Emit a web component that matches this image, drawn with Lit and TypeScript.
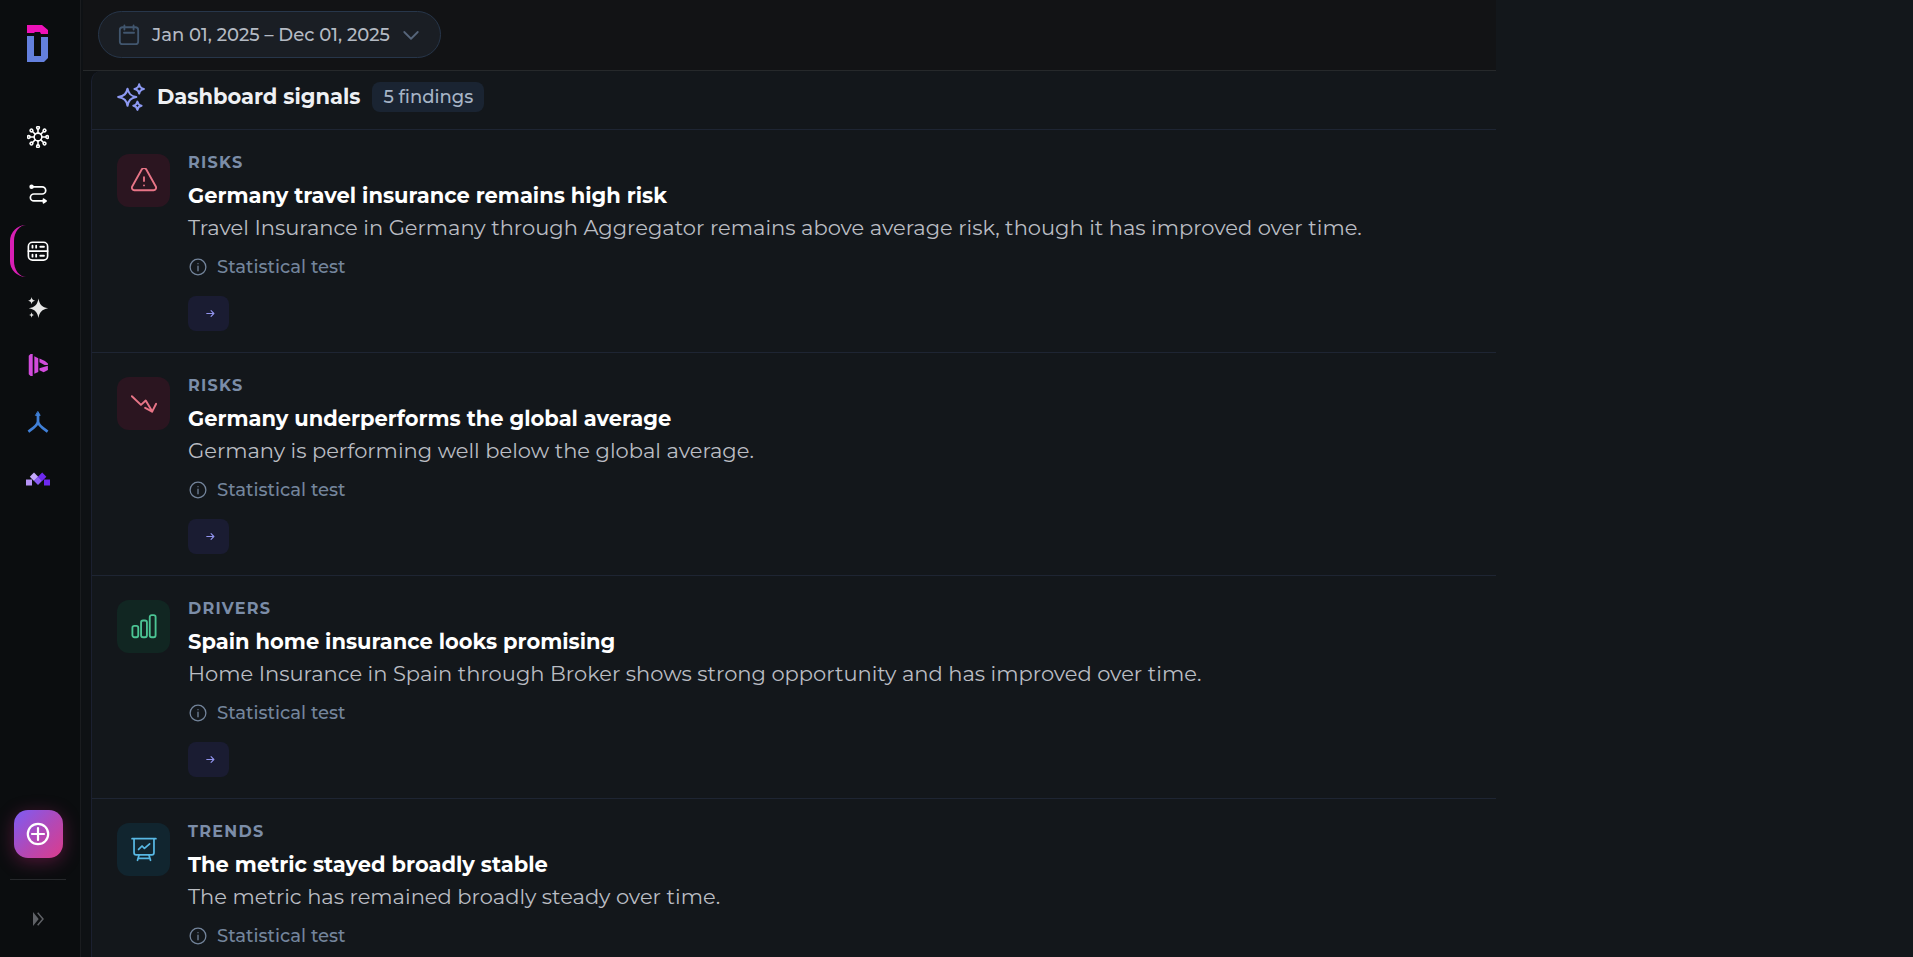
import { LitElement, html, svg, css, type TemplateResult } from "lit";
import { customElement, property } from "lit/decorators.js";

type Tone = "risk" | "driver" | "trend";

interface Finding {
  category: string;
  title: string;
  text: string;
  tone: Tone;
  icon: string;
}

const FINDINGS: Finding[] = [
  {
    category: "Risks",
    title: "Germany travel insurance remains high risk",
    text: "Travel Insurance in Germany through Aggregator remains above average risk, though it has improved over time.",
    tone: "risk",
    icon: "warning",
  },
  {
    category: "Risks",
    title: "Germany underperforms the global average",
    text: "Germany is performing well below the global average.",
    tone: "risk",
    icon: "decline",
  },
  {
    category: "Drivers",
    title: "Spain home insurance looks promising",
    text: "Home Insurance in Spain through Broker shows strong opportunity and has improved over time.",
    tone: "driver",
    icon: "bars",
  },
  {
    category: "Trends",
    title: "The metric stayed broadly stable",
    text: "The metric has remained broadly steady over time.",
    tone: "trend",
    icon: "board",
  },
];

const line = (body: TemplateResult, width = 1.5) => html`<svg
  viewBox="0 0 24 24"
  fill="none"
  stroke="currentColor"
  stroke-width=${width}
  stroke-linecap="round"
  stroke-linejoin="round"
  aria-hidden="true"
>${body}</svg>`;

const solid = (body: TemplateResult) => html`<svg viewBox="0 0 24 24" fill="currentColor" aria-hidden="true">${body}</svg>`;

const ICONS: Record<string, TemplateResult> = {
  hub: line(svg`
    <circle cx="12" cy="12" r="4.2"></circle>
    ${[0, 45, 90, 135, 180, 225, 270, 315].map(
      (a) => svg`<g transform="rotate(${a} 12 12)"><path d="M12 7.5V3.6"></path><circle cx="12" cy="1.9" r="1.5"></circle></g>`
    )}`, 1.7),
  route: line(svg`
    <path d="M5 4.2h11.5a3.9 3.9 0 0 1 0 7.8h-9a3.8 3.8 0 0 0 0 7.6H18"></path>
    <circle cx="5" cy="4.2" r="1.5" fill="currentColor"></circle>
    <path d="M18 17.6l2.8 2-2.8 2z" fill="currentColor"></path>`, 1.9),
  data: line(svg`
    <rect x="1.5" y="2.5" width="21" height="19.5" rx="4.5"></rect>
    <path d="M1.5 12.2h21"></path>
    <path d="M6 6.2v2.2M10 6.2v2.2M14.5 7.4h4M6 16v2.2M10 16v2.2M14.5 17.2h4" stroke-width="2"></path>`, 1.8),
  stars: solid(svg`
    <path d="M12.5 1.5c1 6.4 3.8 9.5 10.5 10.8-6.7 1.3-9.5 4.3-10.5 10.7-1-6.4-3.8-9.4-10.5-10.7 6.7-1.3 9.5-4.4 10.5-10.8z"></path>
    <path d="M5 0c.5 2.7 1.3 3.6 3.8 4C6.3 4.4 5.5 5.3 5 8 4.5 5.3 3.7 4.4 1.2 4 3.7 3.6 4.5 2.7 5 0zM5 16.5c.3 1.9 1 2.6 2.9 3-1.9.4-2.6 1.1-2.9 3-.3-1.9-1-2.6-2.9-3 1.900-.4 2.600-1.100 2.900-3z"></path>`),
  play: solid(svg`
    <path d="M1.9 2l2-2h2.3v24H3.9l-2-2z"></path>
    <path d="M8 2.5l4.300 2v15L8 21.500z"></path>
    <path d="M13.600 4.800l6 2.800 3.200 2.800v1.600h-3.600l-5.600-3z"></path>
    <path d="M13.600 15.500l9.200-2.600v4.600l-4.600 2.300-4.600-2z"></path>`),
  merge: line(svg`
    <path d="M12 3v8.500c0 4-5.500 7.500-10.500 11M12 11.500c0 4 5.500 7.500 10.500 11" stroke-width="3" stroke-linecap="butt"></path>
    <path d="M12 .8l2.400 4h-4.800z" fill="currentColor" stroke-width="1"></path>`),
  tiles: html`<svg viewBox="0 0 24 24" aria-hidden="true">
    <path fill="#b794f6" d="M0 12.500h6v6H0z"></path>
    <path fill="#c4a8fa" d="M8 5.500l4.200 4.200L8 13.900 3.800 9.700z"></path>
    <path fill="#8b5cf6" d="M12 9.600l4.200 4.200L12 18 7.800 13.800z"></path>
    <path fill="#6d28f0" d="M16.200 5.500l4.200 4.200-4.200 4.200L12 9.700zM18 12.500h6v6h-6z"></path>
  </svg>`,
  plus: line(svg`<circle cx="12" cy="12" r="10.200"></circle><path d="M12 6v12M6 12h12"></path>`, 2.200),
  expand: solid(svg`
    <path d="M4.500 1.500L13 12 4.500 22.500z"></path>
    <path d="M11.500 2.500l8 9.500-8 9.500" fill="none" stroke="currentColor" stroke-width="2.200"></path>`),
  calendar: line(svg`
    <rect x="2" y="3.500" width="20" height="18.500" rx="3"></rect>
    <path d="M7 1.500V6M17 1.500V6M6.500 9.500h11"></path>`, 2),
  down: line(svg`<path d="M3 8l9 9 9-9"></path>`, 2.400),
  sparkle: line(svg`
    <path d="M9 5c.9 4.300 2.700 6.100 7.500 7-4.800.9-6.600 2.700-7.500 7.500C8.100 14.700 6.300 12.900 1 12c5.300-.9 7.100-2.700 8-7z"></path>
    <path d="M19 1.200c.5 2.500 1.400 3.400 4 3.900-2.600.5-3.500 1.400-4 3.900-.5-2.500-1.400-3.400-4-3.900 2.600-.5 3.500-1.400 4-3.900z"></path>
    <path d="M17.500 16c.4 2.200 1.200 3 3.500 3.500-2.300.4-3.100 1.200-3.500 3.500-.4-2.300-1.200-3.100-3.500-3.500 2.300-.5 3.100-1.300 3.500-3.500z"></path>`, 1.8),
  warning: line(svg`
    <path d="M10 1.200L1.100 17.100A2.300 2.300 0 0 0 3.100 20.500h17.800a2.300 2.300 0 0 0 2-3.400L14 1.200a2.300 2.300 0 0 0-4 0z"></path>
    <path d="M12 8.500v3.600M12 16v.1"></path>`, 1.700),
  decline: line(svg`
    <path d="M.8 4.800l8.400 8 4.400-4 5.900 10"></path>
    <path d="M13.100 15.500l6.400 3.500 3.700-7.200"></path>`, 1.800),
  bars: line(svg`
    <rect x="1.300" y="11" width="5.400" height="10.500" rx="1.800"></rect>
    <rect x="9.300" y="6" width="5.400" height="15.500" rx="1.800"></rect>
    <rect x="17.300" y="1" width="5.400" height="20.500" rx="1.800"></rect>`, 1.700),
  board: line(svg`
    <path d="M1 1.500h22M2.800 1.500v13a2 2 0 0 0 2 2h14.400a2 2 0 0 0 2-2v-13"></path>
    <path d="M7 11.500l3.200-3.200 2.200 2.200 4.800-4.200M7.500 16.500L6 21.500M16.500 16.500l1.500 5M7 19.700h10"></path>`, 1.600),
  info: line(svg`<circle cx="12" cy="12" r="10.500"></circle><path d="M12 11v6M12 7.500v.1"></path>`, 1.700),
  arrow: line(svg`<path d="M2 12h19M13.500 4.500L21 12l-7.500 7.500"></path>`, 3),
};

const NAV = [
  { label: "Hub", icon: "hub", tint: "white" },
  { label: "Flows", icon: "route", tint: "white" },
  { label: "Dashboards", icon: "data", tint: "white", active: true },
  { label: "Insights", icon: "stars", tint: "soft" },
  { label: "Player", icon: "play", tint: "pink" },
  { label: "Merge", icon: "merge", tint: "blue" },
  { label: "Modules", icon: "tiles", tint: "white", wide: true },
];

@customElement("side-bar")
export class SideBar extends LitElement {
  static styles = css`
    :host {
      box-sizing: border-box;
      display: flex;
      flex-direction: column;
      align-items: center;
      flex: none;
      width: 81px;
      padding: 25px 18px 16px 14px;
      background: #0b0d0f;
      border-right: 1px solid #1a1c1f;
    }
    .logo {
      display: block;
      width: 22px;
      height: 38px;
    }
    nav {
      display: flex;
      flex-direction: column;
      gap: 5px;
      margin-top: 48px;
    }
    a {
      box-sizing: border-box;
      display: flex;
      align-items: center;
      justify-content: center;
      width: 56px;
      height: 52px;
      border-radius: 16px;
      border-left: 4px solid transparent;
      border-right: 4px solid transparent;
      color: #ffffff;
    }
    a.active { border-left-color: #d91fb4; }
    a.soft { color: #e6e6e6; }
    a.pink { color: #d24bdc; }
    a.blue { color: #4080d8; }
    a svg {
      width: 22px;
      height: 22px;
    }
    a.wide svg {
      width: 24px;
      height: 24px;
    }
    .foot {
      display: flex;
      flex-direction: column;
      align-items: center;
      margin-top: auto;
    }
    .add {
      display: grid;
      place-items: center;
      width: 49px;
      height: 48px;
      padding: 0;
      border: 0;
      border-radius: 14px;
      color: #ffffff;
      background: linear-gradient(135deg, #7c5cf5 0%, #b448b4 55%, #dc3c8c 100%);
      box-shadow: 0 4px 18px rgba(210, 40, 130, 0.35);
    }
    .add svg {
      width: 24px;
      height: 24px;
    }
    hr {
      width: 56px;
      height: 1px;
      margin: 21px 0 17px;
      border: 0;
      background: #26282b;
    }
    .expand {
      display: grid;
      place-items: center;
      width: 44px;
      height: 44px;
      padding: 0;
      border: 0;
      background: none;
      color: #5f6166;
    }
    .expand svg {
      width: 16px;
      height: 16px;
    }
  `;

  render() {
    return html`
      <svg class="logo" viewBox="0 0 22 38" role="img" aria-label="Home">
        <path fill="#ee11b8" d="M0 0h15l6 5v4h-7l-1-2H8L7 8H0z"></path>
        <path fill="#6480de" d="M0 11h7v20h7V12h7v21l-4 4H0z"></path>
      </svg>
      <nav aria-label="Main">
        ${NAV.map(
          (n) => html`<a
            href="#"
            class="${n.tint} ${n.active ? "active" : ""} ${n.wide ? "wide" : ""}"
            aria-label=${n.label}
          >${ICONS[n.icon]}</a>`
        )}
      </nav>
      <div class="foot">
        <button class="add" aria-label="Create">${ICONS.plus}</button>
        <hr />
        <button class="expand" aria-label="Expand menu">${ICONS.expand}</button>
      </div>
    `;
  }
}

@customElement("finding-row")
export class FindingRow extends LitElement {
  @property({ attribute: false }) finding!: Finding;

  static styles = css`
    :host {
      display: block;
      border-bottom: 1px solid #1e2533;
    }
    article {
      display: flex;
      gap: 18px;
      padding: 23px 25px 21px;
    }
    .tile {
      display: grid;
      place-items: center;
      flex: none;
      width: 53px;
      height: 53px;
      margin-top: 1px;
      border-radius: 12px;
    }
    .tile svg {
      width: 26px;
      height: 26px;
    }
    .risk { color: #e87587; background: #2b1520; }
    .driver { color: #4cc494; background: #112622; }
    .trend { color: #58b8e4; background: #11252f; }
    .body {
      min-width: 0;
    }
    .category {
      margin: 0 0 6px;
      font-size: 16px;
      font-weight: 700;
      line-height: 20px;
      letter-spacing: 0.08em;
      text-transform: uppercase;
      color: #7b8da8;
    }
    h3 {
      margin: 0 0 1px;
      font-size: 21px;
      font-weight: 700;
      line-height: 33px;
      color: #ffffff;
    }
    .text {
      margin: 0;
      font-size: 21px;
      line-height: 30px;
      color: #babdc3;
    }
    .basis {
      display: flex;
      align-items: center;
      gap: 10px;
      margin: 12px 0 17px;
      padding-left: 1px;
      font-size: 18px;
      font-weight: 500;
      line-height: 24px;
      color: #74859c;
    }
    .basis svg {
      width: 18px;
      height: 18px;
    }
    button {
      display: flex;
      align-items: center;
      justify-content: center;
      width: 41px;
      height: 35px;
      padding: 0 0 0 4px;
      border: 0;
      border-radius: 8px;
      background: #1a1c32;
      color: #9294ee;
    }
    button svg {
      width: 9px;
      height: 9px;
    }
  `;

  render() {
    const f = this.finding;
    return html`
      <article>
        <div class="tile ${f.tone}">${ICONS[f.icon]}</div>
        <div class="body">
          <p class="category">${f.category}</p>
          <h3>${f.title}</h3>
          <p class="text">${f.text}</p>
          <p class="basis">${ICONS.info}<span>Statistical test</span></p>
          <button aria-label="Open finding">${ICONS.arrow}</button>
        </div>
      </article>
    `;
  }
}

@customElement("app-root")
export class AppRoot extends LitElement {
  static styles = css`
    :host {
      display: flex;
      height: 100vh;
      overflow: hidden;
      background: #13171b;
      font-family: Montserrat, Inter, "Open Sans", sans-serif;
    }
    main {
      display: flex;
      flex-direction: column;
      flex: 1;
      min-width: 0;
      background: #0e1114;
    }
    .side {
      flex: none;
      width: 21.8%;
    }
    .topbar {
      margin-left: 2px;
      padding: 11px 15px 12px;
      border-bottom: 1px solid #26292b;
      background: #121315;
    }
    .range {
      box-sizing: border-box;
      display: flex;
      align-items: center;
      height: 47px;
      padding: 0 20px 0 19px;
      border: 1px solid #27364a;
      border-radius: 24px;
      background: #1a1e24;
      font: 500 18px / 24px Montserrat, Inter, "Open Sans", sans-serif;
      color: #b4bac3;
    }
    .range svg {
      width: 22px;
      height: 22px;
      margin-right: 12px;
      color: #41566e;
    }
    .range svg:last-child {
      width: 18px;
      height: 18px;
      margin: 0 0 0 12px;
      color: #56657a;
    }
    .scroll {
      display: flex;
      flex: 1;
      min-height: 0;
      overflow: hidden;
      padding-left: 10px;
    }
    section {
      flex: 1;
      min-width: 0;
      height: max-content;
      background: #13171b;
      border-left: 1px solid #1b2030;
      border-top-left-radius: 10px;
    }
    header {
      display: flex;
      align-items: center;
      gap: 12px;
      padding: 11px 25px 17px;
      border-bottom: 1px solid #1e2533;
    }
    header svg {
      width: 28px;
      height: 28px;
      color: #8d99f2;
    }
    h2 {
      margin: 0;
      font-size: 21px;
      font-weight: 700;
      line-height: 30px;
      color: #eef0f3;
    }
    .count {
      padding: 0 11px;
      border-radius: 8px;
      background: #1a2432;
      font-size: 18px;
      font-weight: 500;
      line-height: 30px;
      color: #a6b4c6;
    }
  `;

  render() {
    return html`
      <side-bar></side-bar>
      <main>
        <div class="topbar">
          <button class="range">
            ${ICONS.calendar}<span>Jan 01, 2025 – Dec 01, 2025</span>${ICONS.down}
          </button>
        </div>
        <div class="scroll">
          <section>
            <header>
              ${ICONS.sparkle}
              <h2>Dashboard signals</h2>
              <span class="count">5 findings</span>
            </header>
            ${FINDINGS.map((f) => html`<finding-row .finding=${f}></finding-row>`)}
          </section>
        </div>
      </main>
      <div class="side"></div>
    `;
  }
}
